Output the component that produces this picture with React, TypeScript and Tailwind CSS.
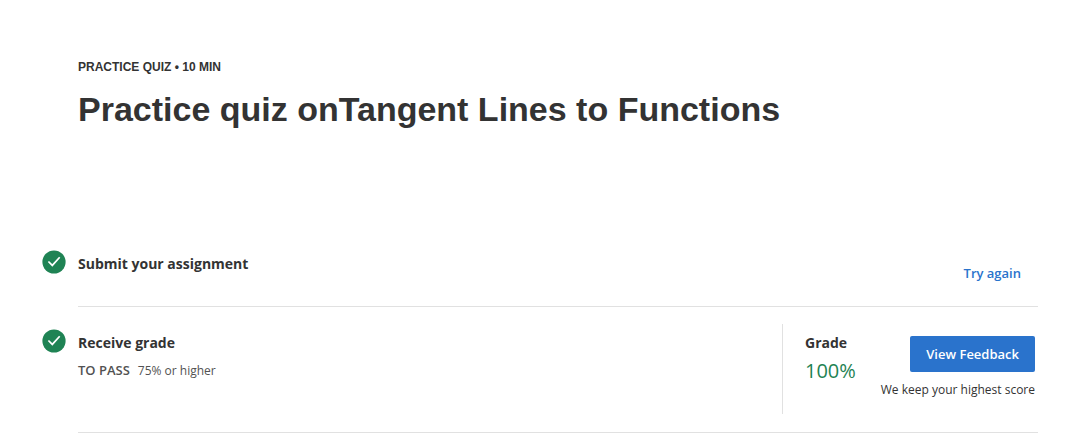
function CheckBadge() {
  return (
    <svg className="size-6 shrink-0" viewBox="0 0 24 24" role="img" aria-label="Completed">
      <circle cx="12" cy="12" r="11.6" fill="#1f8354" />
      <path d="M6.400 11.500l3.900 3.900 7.400-8.200" fill="none" stroke="#fff" strokeWidth="1.7" />
    </svg>
  );
}

export default function App() {
  return (
    <main className="bg-white pl-[42px] pr-[37px] pt-[58px] font-['Open_Sans',sans-serif] text-[#333]">
      <header className="pl-9 font-['Liberation_Sans',sans-serif] font-bold">
        <p className="text-xs leading-[18px]">PRACTICE QUIZ • 10 MIN</p>
        <h1 className="mt-3 text-[34px] leading-[42px]">Practice quiz onTangent Lines to Functions</h1>
      </header>

      <section className="mt-30 flex">
        <div className="w-9 shrink-0">
          <CheckBadge />
        </div>
        <div className="flex h-[57px] grow justify-between border-b border-[#e1e1e1]">
          <h2 className="pt-1 text-sm leading-5 font-bold">Submit your assignment</h2>
          <a href="#retry" className="mr-[17px] pt-[13px] text-[13px] leading-5 font-semibold text-[#2a73cc]">
            Try again
          </a>
        </div>
      </section>

      <section className="flex">
        <div className="w-9 shrink-0 pt-[22px]">
          <CheckBadge />
        </div>
        <div className="flex grow justify-between border-b border-[#e1e1e1] pt-[17px] pb-[18px]">
          <div className="pt-[9px]">
            <h2 className="text-sm leading-5 font-bold">Receive grade</h2>
            <p className="mt-2 flex gap-2 text-xs leading-5 text-[#525252]">
              <strong className="text-[13px] leading-[18px] font-semibold">TO PASS</strong>
              <span>75% or higher</span>
            </p>
          </div>
          <div className="flex w-64 justify-between border-l border-[#e1e1e1] pr-[3px] pb-[14px] pl-[22px]">
            <div className="pt-[9px]">
              <h2 className="text-sm leading-5 font-bold">Grade</h2>
              <p className="mt-1 text-xl leading-7 text-[#1f8354]">100%</p>
            </div>
            <div className="flex flex-col items-end pt-3">
              <button
                type="button"
                className="h-9 rounded-xs bg-[#2a73cc] px-4 text-[13px] leading-5 font-semibold text-white"
              >
                View Feedback
              </button>
              <p className="mt-2 text-xs leading-5 whitespace-nowrap">We keep your highest score</p>
            </div>
          </div>
        </div>
      </section>
    </main>
  );
}
